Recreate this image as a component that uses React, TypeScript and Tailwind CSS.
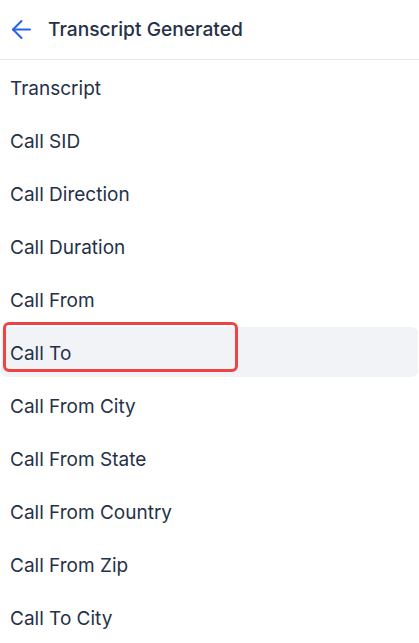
import React from 'react';

const fields = [
  'Transcript',
  'Call SID',
  'Call Direction',
  'Call Duration',
  'Call From',
  'Call To',
  'Call From City',
  'Call From State',
  'Call From Country',
  'Call From Zip',
  'Call To City',
];

export default function App() {
  return (
    <div className="w-[419px] h-[643px] overflow-hidden bg-white text-[#253147]" style={{ fontFamily: 'Inter, "Noto Sans", sans-serif' }}>
      {/* Header */}
      <div className="h-[60px] flex items-center border-b border-[#e5e7eb]">
        <button className="ml-[7px] mr-[12px] flex items-center text-[#2563eb]">
          <svg width="29" height="29" viewBox="0 0 24 24" fill="none" stroke="currentColor" strokeWidth={1.7} strokeLinecap="round" strokeLinejoin="round">
            <path d="M19 12H5" />
            <path d="M12 19l-7-7 7-7" />
          </svg>
        </button>
        <h1 className="text-[19.2px] font-medium text-[#253147]">Transcript Generated</h1>
      </div>

      {/* Field list */}
      <ul className="flex flex-col gap-[3px] pt-[2px] px-[1px]">
        {fields.map((f) => {
          const active = f === 'Call To';
          return (
            <li
              key={f}
              className={`relative h-[50px] flex items-center pl-[9px] pt-[5px] rounded-md text-[19px] ${active ? 'bg-[#f1f3f6]' : ''}`}
            >
              {f}
              {active && (
                <div className="absolute left-[2px] top-[-5px] w-[235px] h-[50px] border-[3px] border-[#ef4444] rounded-md" />
              )}
            </li>
          );
        })}
      </ul>
    </div>
  );
}
